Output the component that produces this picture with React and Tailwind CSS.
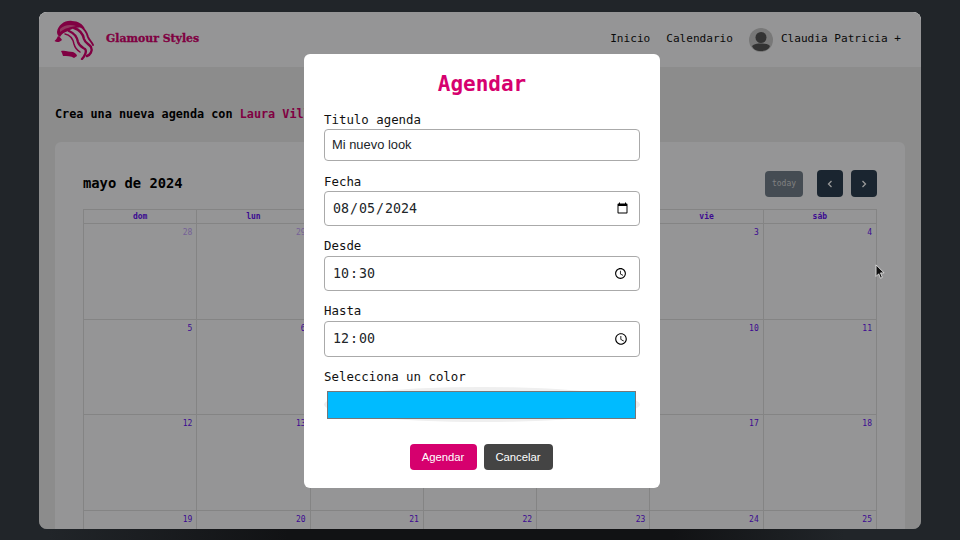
import React from 'react';

const mono = "font-['DejaVu_Sans_Mono','Liberation_Mono',monospace]";

const weeks = [
  [[28, true], [29, true], [30, true], [1], [2], [3], [4]],
  [[5], [6], [7], [8], [9], [10], [11]],
  [[12], [13], [14], [15], [16], [17], [18]],
  [[19], [20], [21], [22], [23], [24], [25]],
];

const dayNames = ['dom', 'lun', 'mar', 'mié', 'jue', 'vie', 'sáb'];

function Logo() {
  return (
    <svg viewBox="0 0 40 40" className="w-10 h-10 shrink-0" fill="#d6006e" stroke="none">
      <path d="M3 12C4 5 11 0 18 1 24 1 29 4 31 9 26 6 20 8 16 10 12 12 8 13 6 17 4 16 3 14 3 12Z" />
      <path d="M6 9C10 5 16 4 22 6 17 7 11 8 6 12Z" fill="#f0609f" />
      <g fill="none" stroke="#d6006e" strokeLinecap="round">
        <path d="M20 8C26 10 29 14 30 19 31 23 35 24 37 27 39 31 36 35 33 36" strokeWidth="2.4" />
        <path d="M15 11C20 13 23 17 24 22 25 26 28 27 31 29 33 31 31 36 28 39" strokeWidth="2.4" />
        <path d="M26 6C31 9 33 13 34 17 35 20 38 22 39 25" strokeWidth="2" />
        <path d="M11 14C16 15 19 19 20 24 21 28 23 30 26 32" strokeWidth="1.5" />
      </g>
      <path d="M4 16C3 18 2 20 0.5 21 3 23 6 22 8 20 7 18 6 17 4 16Z" />
      <path d="M7 31C11 30 15 32 19 32 21 33 23 34 23 36L20 38C17 36 13 36 9 36L8 33Z" />
    </svg>
  );
}

function Avatar() {
  return (
    <svg viewBox="0 0 24 24" className="w-6 h-6 rounded-full bg-[#c8c8c8] shrink-0">
      <circle cx="12" cy="9.5" r="5.5" fill="#555" />
      <path d="M3 18c2-2 5-2.5 9-2.5s7 .5 9 2.5c-1 3-4 5-9 5s-8-2-9-5z" fill="#555" />
    </svg>
  );
}

function Calendar() {
  return (
    <div className="bg-[#f8f9fa] ml-4 mr-4 mt-[21px] rounded-md px-7 pt-7">
      <div className="flex items-center justify-between h-[27px]">
        <h2 className={`${mono} text-[13.8px] font-bold text-black`}>mayo de 2024</h2>
        <div className="flex items-center">
          <button className={`${mono} w-[38px] h-[26px] rounded-sm bg-[#737f8b] text-[#d5d5d5] text-[8px]`}>today</button>
          <button className="w-[26px] h-[27px] ml-[14px] rounded-sm bg-[#2c3e50] flex items-center justify-center">
            <svg viewBox="0 0 10 10" className="w-2.5 h-2.5" fill="none" stroke="#fff" strokeWidth="1.3"><path d="M6.5 2 3.5 5l3 3" /></svg>
          </button>
          <button className="w-[26px] h-[27px] ml-2 rounded-sm bg-[#2c3e50] flex items-center justify-center">
            <svg viewBox="0 0 10 10" className="w-2.5 h-2.5" fill="none" stroke="#fff" strokeWidth="1.3"><path d="M3.5 2l3 3-3 3" /></svg>
          </button>
        </div>
      </div>
      <div className={`${mono} mt-3 border-l border-t border-[#ddd]`}>
        <div className="grid grid-cols-7 h-[14px]">
          {dayNames.map((d) => (
            <div key={d} className="border-r border-b border-[#ddd] text-center text-[8px] font-bold text-[#6610f2] leading-[13px]">{d}</div>
          ))}
        </div>
        {weeks.map((week, i) => (
          <div key={i} className="grid grid-cols-7 h-[95.6px]">
            {week.map(([n, other]) => (
              <div key={n} className={`border-r border-b border-[#ddd] text-right text-[8px] pr-[4px] pt-1 leading-[10px] ${other ? 'text-[#c4a2fa]' : 'text-[#6610f2]'}`}>{n}</div>
            ))}
          </div>
        ))}
      </div>
    </div>
  );
}

function Field({ label, children, className }) {
  return (
    <div className={className}>
      <label className={`${mono} block text-[12.4px] leading-[16px] text-[#111]`}>{label}</label>
      {children}
    </div>
  );
}

function Modal() {
  const input = 'block w-full rounded border border-[#aaa] bg-white pl-[7px] pr-2 text-[#212529]';
  const noAmPm = '[&::-webkit-datetime-edit-ampm-field]:hidden';
  return (
    <div className="absolute left-[265px] top-[42px] w-[356px] h-[434px] bg-white rounded-md px-5 pt-[17px]">
      <h2 className={`${mono} text-center text-[21px] leading-[26px] font-bold text-[#d6006e]`}>Agendar</h2>
      <Field label="Titulo agenda" className="mt-[15px]">
        <input type="text" defaultValue="Mi nuevo look" className={`${input} mt-[1px] h-[32px] pb-[2px] font-['Liberation_Sans',sans-serif] text-[12.9px]`} />
      </Field>
      <Field label="Fecha" className="mt-[13px]">
        <input type="date" defaultValue="2024-08-05" className={`${input} ${mono} mt-[1px] h-[35px] text-[13.3px]`} />
      </Field>
      <Field label="Desde" className="mt-3">
        <input type="time" defaultValue="10:30" className={`${input} ${mono} ${noAmPm} mt-[2px] h-[35px] text-[13.3px]`} />
      </Field>
      <Field label="Hasta" className="mt-3">
        <input type="time" defaultValue="12:00" className={`${input} ${mono} ${noAmPm} mt-[2px] h-[36px] text-[13.3px]`} />
      </Field>
      <Field label="Selecciona un color" className="mt-3">
        <div className="mt-[2px] h-[35px] rounded-[50%] bg-[#efefef]">
          <input type="color" defaultValue="#00bbff" className="block w-full h-full pl-[3px] pr-[4px] pt-[4px] pb-[3px] [&::-webkit-color-swatch-wrapper]:p-0" />
        </div>
      </Field>
      <div className="flex justify-center gap-[7px] mt-[22px] pr-[2px] font-['Liberation_Sans',sans-serif] text-[11.3px]">
        <button className="w-[67px] h-[26px] rounded-sm bg-[#d6006e] text-white">Agendar</button>
        <button className="w-[69px] h-[26px] rounded-sm bg-[#444] text-white">Cancelar</button>
      </div>
    </div>
  );
}

export default function App() {
  return (
    <div className="h-[540px] overflow-hidden bg-[#212529] pt-3">
      <div className="relative mx-[39px] h-[517px] overflow-hidden rounded-lg bg-[#e9e9e9]">
        <header className="h-[55px] bg-[#f8f9fa] flex items-center justify-between pl-[15px] pr-5">
          <div className="flex items-center gap-3">
            <Logo />
            <span className="font-['DejaVu_Serif',serif] font-bold text-[10.9px] text-[#d6006e] [-webkit-text-stroke:0.3px_#d6006e]">Glamour Styles</span>
          </div>
          <nav className={`${mono} flex items-center text-[11.08px] text-[#111]`}>
            <span>Inicio</span>
            <span className="ml-[16px]">Calendario</span>
            <span className="ml-4"><Avatar /></span>
            <span className="ml-2">Claudia Patricia +</span>
          </nav>
        </header>
        <p className={`${mono} mt-10 ml-4 text-[11.8px] leading-[14px] font-bold text-black`}>
          Crea una nueva agenda con <span className="text-[#d6006e]">Laura Villa</span>
        </p>
        <Calendar />
        <div className="absolute inset-0 bg-black/40" />
        <Modal />
        <svg viewBox="0 0 12 18" className="absolute left-[836px] top-[252px] w-[11px] h-[16px]">
          <path d="M1 1v13l3-3 2 5 2-1-2-5h4z" fill="#111" stroke="#fff" strokeWidth="0.8" />
        </svg>
      </div>
      <div className="h-[11px] bg-[linear-gradient(90deg,#212529_5%,#111214_30%,#111214_70%,#212529_88%)]" />
    </div>
  );
}
